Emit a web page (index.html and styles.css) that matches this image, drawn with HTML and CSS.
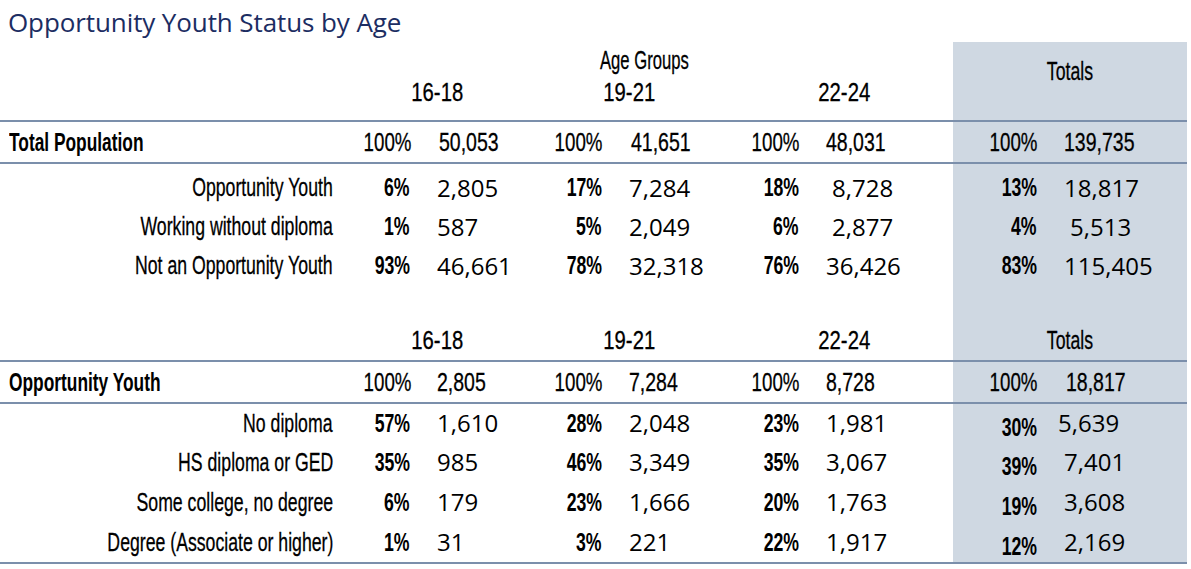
FILE: index.html
```html
<!DOCTYPE html>
<html lang="en">
<head>
<meta charset="utf-8">
<title>Opportunity Youth Status by Age</title>
<link rel="stylesheet" href="styles.css">
</head>
<body>
<div class="page">
  <h1 class="title">Opportunity Youth Status by Age</h1>
  <table class="sheet">
    <colgroup>
      <col class="c-lbl"><col class="c-p1"><col class="c-n1"><col class="c-p2"><col class="c-n2"><col class="c-p3"><col class="c-n3"><col class="c-pt"><col class="c-nt">
    </colgroup>
    <tbody>
      <tr class="r-top">
        <td></td>
        <td colspan="6" class="cn hd age"><span class="sq">Age Groups</span></td>
        <td colspan="2" rowspan="2" class="cn hd tot totals-top line"><span class="sq">Totals</span></td>
      </tr>
      <tr class="r-sub line">
        <td></td>
        <td colspan="2" class="cn hd dg"><span class="sq">16-18</span></td>
        <td colspan="2" class="cn hd dg g2"><span class="sq">19-21</span></td>
        <td colspan="2" class="cn hd dg g3"><span class="sq">22-24</span></td>
      </tr>
      <tr class="r-head line">
        <td class="cn b grp"><span class="sq">Total Population</span></td>
        <td class="cn pct"><span class="sq">100%</span></td><td class="cn n hn"><span class="sq">50,053</span></td>
        <td class="cn pct"><span class="sq">100%</span></td><td class="cn n hn"><span class="sq">41,651</span></td>
        <td class="cn pct"><span class="sq">100%</span></td><td class="cn n"><span class="sq">48,031</span></td>
        <td class="cn pct tot"><span class="sq">100%</span></td><td class="cn n tot"><span class="sq">139,735</span></td>
      </tr>
      <tr class="r-data first">
        <td class="cn lbl"><span class="sq">Opportunity Youth</span></td>
        <td class="cn b pct"><span class="sq">6%</span></td><td class="num n">2,805</td>
        <td class="cn b pct"><span class="sq">17%</span></td><td class="num n">7,284</td>
        <td class="cn b pct"><span class="sq">18%</span></td><td class="num n i6">8,728</td>
        <td class="cn b pct tot"><span class="sq">13%</span></td><td class="num n tot">18,817</td>
      </tr>
      <tr class="r-data">
        <td class="cn lbl"><span class="sq">Working without diploma</span></td>
        <td class="cn b pct"><span class="sq">1%</span></td><td class="num n">587</td>
        <td class="cn b pct"><span class="sq">5%</span></td><td class="num n">2,049</td>
        <td class="cn b pct"><span class="sq">6%</span></td><td class="num n i6">2,877</td>
        <td class="cn b pct tot"><span class="sq">4%</span></td><td class="num n i6 tot">5,513</td>
      </tr>
      <tr class="r-data">
        <td class="cn lbl"><span class="sq">Not an Opportunity Youth</span></td>
        <td class="cn b pct"><span class="sq">93%</span></td><td class="num n">46,661</td>
        <td class="cn b pct"><span class="sq">78%</span></td><td class="num n">32,318</td>
        <td class="cn b pct"><span class="sq">76%</span></td><td class="num n">36,426</td>
        <td class="cn b pct tot"><span class="sq">83%</span></td><td class="num n tot">115,405</td>
      </tr>
      <tr class="r-gap">
        <td></td><td></td><td></td><td></td><td></td><td></td><td></td><td class="tot"></td><td class="tot"></td>
      </tr>
      <tr class="r-sub2 line">
        <td></td>
        <td colspan="2" class="cn hd dg"><span class="sq">16-18</span></td>
        <td colspan="2" class="cn hd dg g2"><span class="sq">19-21</span></td>
        <td colspan="2" class="cn hd dg g3"><span class="sq">22-24</span></td>
        <td colspan="2" class="cn hd tot"><span class="sq">Totals</span></td>
      </tr>
      <tr class="r-head line">
        <td class="cn b grp"><span class="sq">Opportunity Youth</span></td>
        <td class="cn pct"><span class="sq">100%</span></td><td class="cn n"><span class="sq">2,805</span></td>
        <td class="cn pct"><span class="sq">100%</span></td><td class="cn n"><span class="sq">7,284</span></td>
        <td class="cn pct"><span class="sq">100%</span></td><td class="cn n"><span class="sq">8,728</span></td>
        <td class="cn pct tot"><span class="sq">100%</span></td><td class="cn n hn tot"><span class="sq">18,817</span></td>
      </tr>
      <tr class="r-data r-short">
        <td class="cn lbl"><span class="sq">No diploma</span></td>
        <td class="cn b pct"><span class="sq">57%</span></td><td class="num n">1,610</td>
        <td class="cn b pct"><span class="sq">28%</span></td><td class="num n">2,048</td>
        <td class="cn b pct"><span class="sq">23%</span></td><td class="num n">1,981</td>
        <td class="cn b pct tot"><span class="sq low">30%</span></td><td class="num n tot i-6">5,639</td>
      </tr>
      <tr class="r-data r-tall">
        <td class="cn lbl"><span class="sq">HS diploma or GED</span></td>
        <td class="cn b pct"><span class="sq">35%</span></td><td class="num n">985</td>
        <td class="cn b pct"><span class="sq">46%</span></td><td class="num n">3,349</td>
        <td class="cn b pct"><span class="sq">35%</span></td><td class="num n">3,067</td>
        <td class="cn b pct tot"><span class="sq low">39%</span></td><td class="num n tot">7,401</td>
      </tr>
      <tr class="r-data r-tall">
        <td class="cn lbl"><span class="sq">Some college, no degree</span></td>
        <td class="cn b pct"><span class="sq">6%</span></td><td class="num n">179</td>
        <td class="cn b pct"><span class="sq">23%</span></td><td class="num n">1,666</td>
        <td class="cn b pct"><span class="sq">20%</span></td><td class="num n">1,763</td>
        <td class="cn b pct tot"><span class="sq low">19%</span></td><td class="num n tot">3,608</td>
      </tr>
      <tr class="r-data r-tall line">
        <td class="cn lbl"><span class="sq">Degree (Associate or higher)</span></td>
        <td class="cn b pct"><span class="sq">1%</span></td><td class="num n">31</td>
        <td class="cn b pct"><span class="sq">3%</span></td><td class="num n">221</td>
        <td class="cn b pct"><span class="sq">22%</span></td><td class="num n">1,917</td>
        <td class="cn b pct tot"><span class="sq low">12%</span></td><td class="num n tot">2,169</td>
      </tr>
    </tbody>
  </table>
</div>
</body>
</html>
```
FILE: styles.css
```css
html, body {
  margin: 0;
  padding: 0;
  background: #ffffff;
}

.page {
  display: flex;
  flex-direction: column;
  align-items: flex-start;
}

.title {
  margin: 0;
  padding: 4px 0 0 8px;
  font-family: "Open Sans", "Noto Sans", sans-serif;
  font-weight: 400;
  font-size: 26px;
  line-height: 36px;
  color: #1c2d62;
  letter-spacing: -0.1px;
}

.sheet {
  margin-top: 2px;
  width: 1187px;
  table-layout: fixed;
  border-collapse: separate;
  border-spacing: 0;
}

/* column boundaries: 345 | 412 | 530 | 604 | 720 | 801 | 953 | 1039 | 1187 */
.c-lbl { width: 345px; }
.c-p1 { width: 67px; }
.c-n1 { width: 118px; }
.c-p2 { width: 74px; }
.c-n2 { width: 116px; }
.c-p3 { width: 81px; }
.c-n3 { width: 152px; }
.c-pt { width: 86px; }
.c-nt { width: 148px; }

.sheet td {
  padding: 0;
  white-space: nowrap;
  color: #000000;
  vertical-align: middle;
}

/* condensed headline face (Futura Condensed look-alike) */
.cn {
  font-family: "Liberation Sans", Arial, sans-serif;
  font-size: 26px;
  font-weight: 400;
  -webkit-text-stroke: 0.3px #000;
}

.sq {
  display: inline-block;
  transform: scaleX(0.68);
  transform-origin: 50% 50%;
}

.b { font-weight: 700; -webkit-text-stroke: 0; }
.b .sq { transform: scaleX(0.68); }
.grp .sq { transform: scaleX(0.667); }
.dg .sq { transform: scaleX(0.78); }
.age .sq { transform: scaleX(0.64); }
.pct .sq { transform: scaleX(0.72); }
.b.pct .sq { transform: scaleX(0.68); }
.n .sq { transform: scaleX(0.75); }

.pct .sq,
.lbl .sq { transform-origin: 100% 50%; }
.n .sq,
.grp .sq { transform-origin: 0 50%; }

.num {
  font-family: "Open Sans", "Noto Sans", sans-serif;
  font-size: 24px;
  font-weight: 400;
}

.tot { background: #cfd8e2; }

.line td,
td.line {
  border-bottom: 2px solid #7b8fab;
}

.hd { text-align: center; }
.age { padding-right: 10px !important; }
.g2 { padding-left: 8px !important; }
.g3 { padding-left: 16px !important; }

.grp { text-align: left; padding-left: 9px !important; }
.lbl { text-align: right; padding-right: 12px !important; }
.pct { text-align: right; padding-right: 2px !important; }
.n { text-align: left; padding-left: 25px !important; }
.hn { padding-left: 27px !important; }
.i6 { padding-left: 31px !important; }
.i-6 { padding-left: 19px !important; }

.low {
  vertical-align: -4px;
  line-height: 1;
}

/* rows */
.r-top td { line-height: 36px; }
.r-top .totals-top {
  vertical-align: top;
  line-height: 36px;
  padding-top: 11px;
}
.r-sub td { line-height: 28px; padding-bottom: 14px; }
.r-head td { line-height: 40px; }
.r-data td { line-height: 39px; }
.r-data.first td { padding-top: 4px; }
.r-gap { height: 35px; }
.r-sub2 td { line-height: 40px; }
.r-short td { line-height: 38px; }
.r-tall td { line-height: 40px; }
```
